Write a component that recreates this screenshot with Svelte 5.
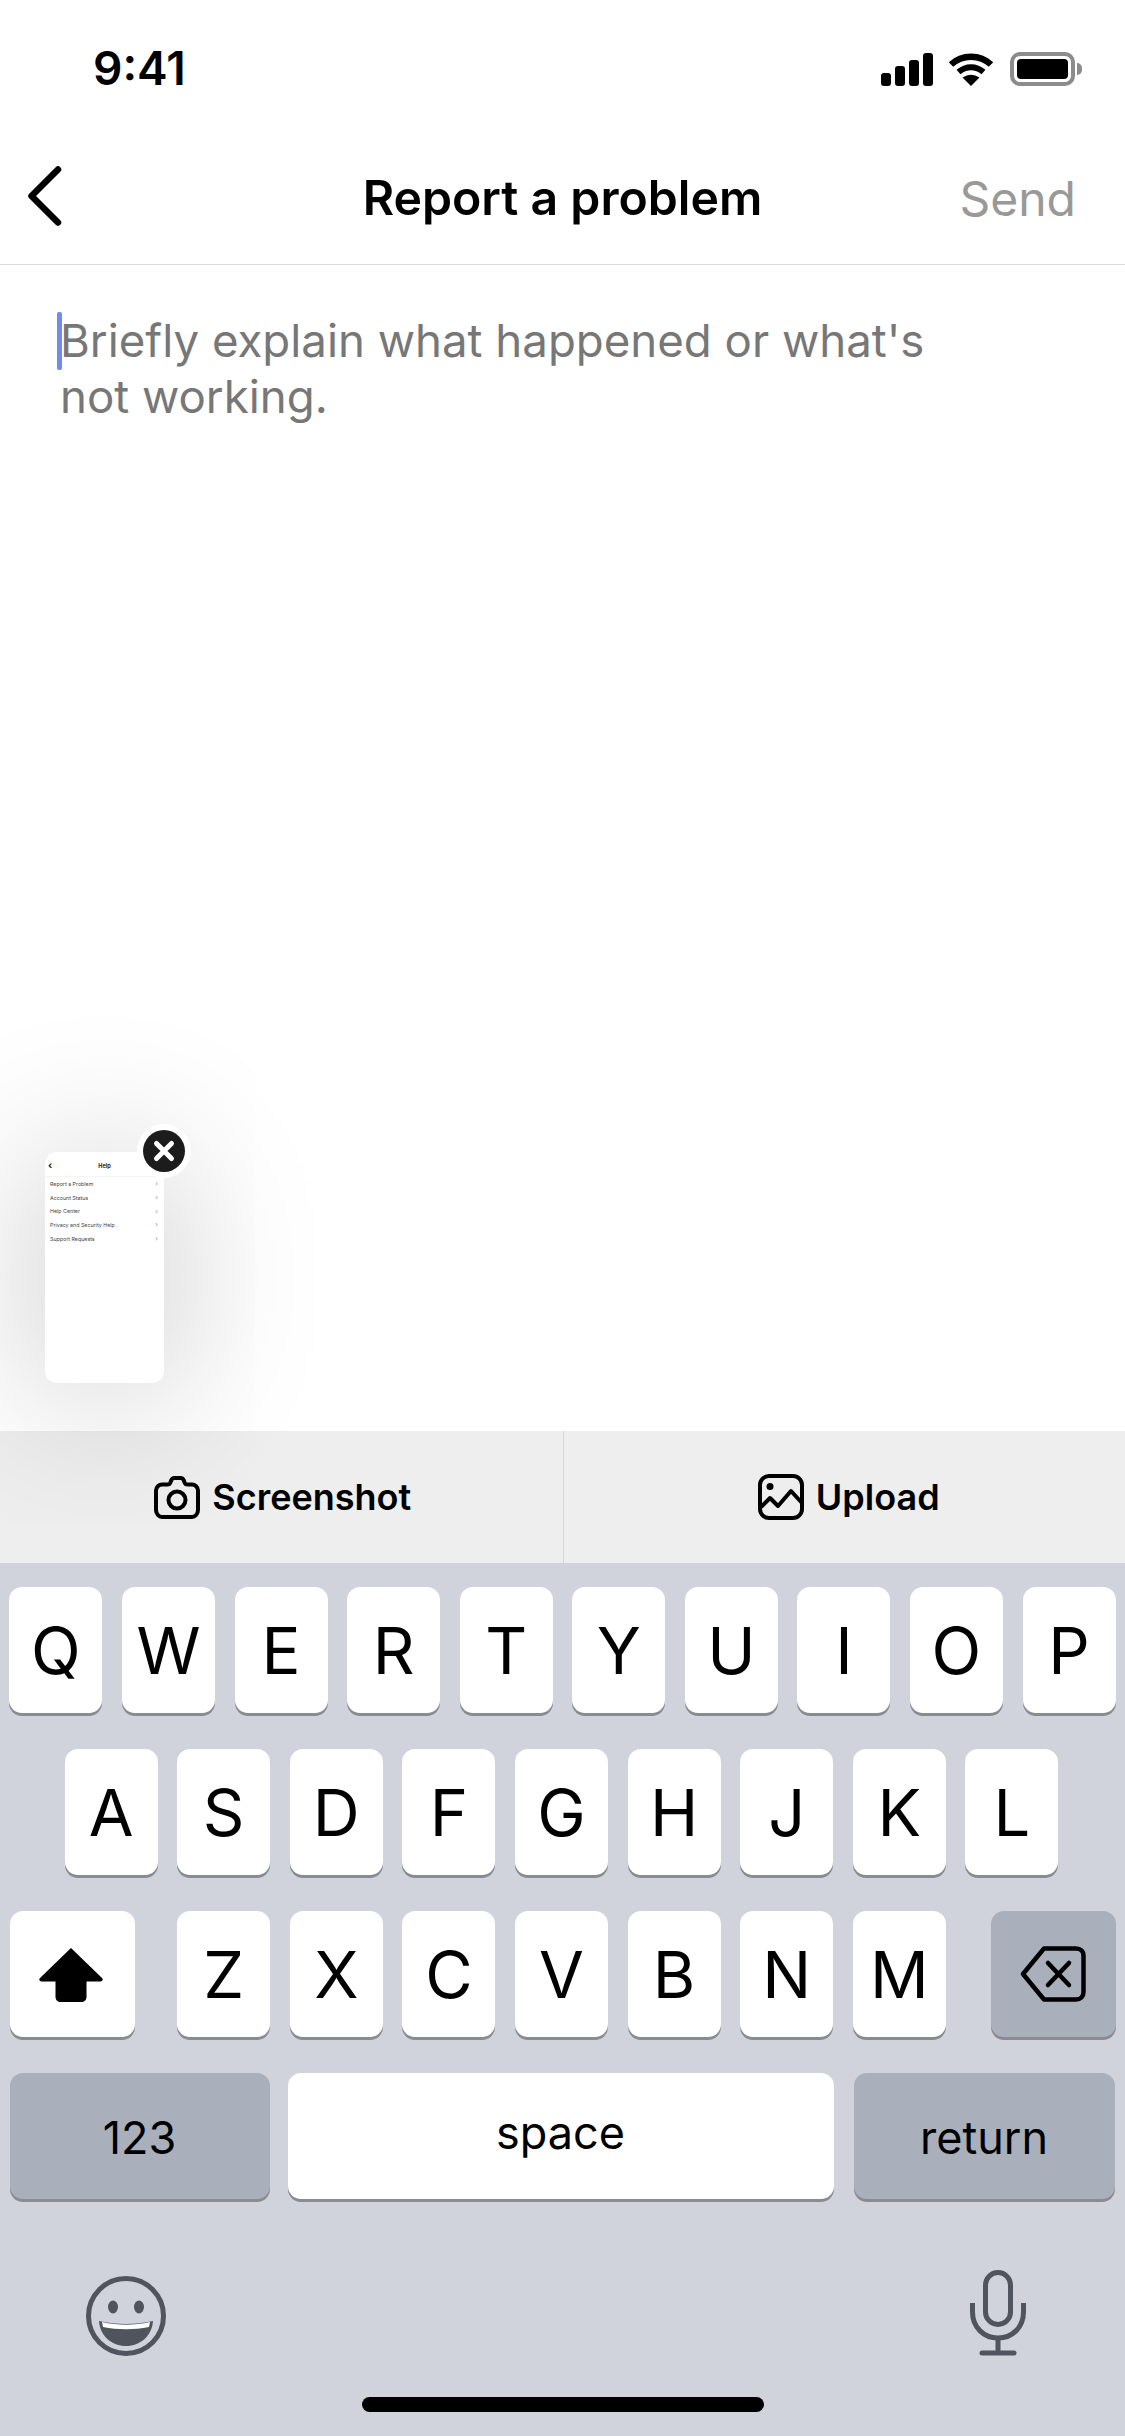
<script>
  const row1 = ['Q','W','E','R','T','Y','U','I','O','P'];
  const row2 = ['A','S','D','F','G','H','J','K','L'];
  const row3 = ['Z','X','C','V','B','N','M'];
  const helpRows = ['Report a Problem','Account Status','Help Center','Privacy and Security Help','Support Requests'];
</script>

<div class="screen">
  <header class="status">
    <span class="time">9:41</span>
    <div class="status-icons">
      <svg class="signal" width="52" height="33" viewBox="0 0 52 33" fill="#000">
        <rect x="0" y="20" width="10" height="13" rx="3"/>
        <rect x="14" y="13" width="10" height="20" rx="3"/>
        <rect x="28" y="7" width="10" height="26" rx="3"/>
        <rect x="42" y="0" width="10" height="33" rx="3"/>
      </svg>
      <svg class="wifi" width="46" height="34" viewBox="0 0 46 34">
        <path d="M3 12.5C14 2 32 2 43 12.5" fill="none" stroke="#000" stroke-width="6.5"/>
        <path d="M10.5 20C18 13.5 28 13.5 35.5 20" fill="none" stroke="#000" stroke-width="6"/>
        <path d="M14.500 25.500Q23 20 31.500 25.500L23 34Z" fill="#000"/>
      </svg>
      <div class="battery"><div class="battery-fill"></div></div>
      <div class="battery-cap"></div>
    </div>
  </header>

  <nav class="nav">
    <svg class="back" width="36" height="60" viewBox="0 0 36 60">
      <path d="M32 3.500L5.500 30L32 56.500" fill="none" stroke="#000" stroke-width="6.500" stroke-linecap="round" stroke-linejoin="round"/>
    </svg>
    <h1>Report a problem</h1>
    <span class="send">Send</span>
  </nav>

  <main class="compose">
    <div class="field"><span class="caret"></span><p>Briefly explain what happened or what's<br>not working.</p></div>
    <div class="thumb">
      <div class="thumb-nav"><span class="thumb-back">‹</span><b>Help</b></div>
      {#each helpRows as item}
        <div class="thumb-row"><span>{item}</span><i>›</i></div>
      {/each}
    </div>
    <div class="close">
      <svg width="42" height="42" viewBox="0 0 42 42">
        <circle cx="21" cy="21" r="21" fill="#1c1c1c"/>
        <path d="M13.500 13.500L28.500 28.500M28.500 13.500L13.500 28.500" stroke="#fff" stroke-width="5" stroke-linecap="round"/>
      </svg>
    </div>
  </main>

  <div class="accessory">
    <div class="action shot">
      <svg width="46" height="44" viewBox="0 0 46 44" fill="none" stroke="#000" stroke-width="4">
        <path d="M8 9.500h5.500c1.500 0 2.500-.8 3-2.200l.8-2c.5-1.400 1.500-2.300 3-2.300h6.400c1.500 0 2.500.9 3 2.300l.8 2c.5 1.400 1.500 2.200 3 2.200H38c3 0 6 2.500 6 6V35c0 4-3 7-6 7H8c-3 0-6-3-6-7V15.500c0-3.500 3-6 6-6Z"/>
        <circle cx="23" cy="25" r="8.500"/>
      </svg>
      <span>Screenshot</span>
    </div>
    <div class="action up">
      <svg width="46" height="46" viewBox="0 0 46 46" fill="none" stroke="#000" stroke-width="4">
        <rect x="2" y="2" width="42" height="42" rx="9"/>
        <circle cx="12" cy="12.500" r="3.500" fill="#000" stroke="none"/>
        <path d="M3 33l9-9 8 8 13-15 11 12" stroke-linejoin="round"/>
      </svg>
      <span>Upload</span>
    </div>
  </div>

  <section class="keyboard">
    <div class="row">
      {#each row1 as k}<div class="key">{k}</div>{/each}
    </div>
    <div class="row row2">
      {#each row2 as k}<div class="key">{k}</div>{/each}
    </div>
    <div class="row row3">
      <div class="key shift">
        <svg width="64" height="55" viewBox="0 0 64 55"><path d="M32 1L63 31c1.500 1.500.5 3.500-1.500 3.500H47.500V50c0 2.500-2 5-4.500 5H21c-2.500 0-4.500-2.500-4.500-5V34.500H2.500C.5 34.500-.5 32.500 1 31L32 1Z" fill="#000"/></svg>
      </div>
      <div class="letters">
        {#each row3 as k}<div class="key">{k}</div>{/each}
      </div>
      <div class="key delete dark">
        <svg width="66" height="56" viewBox="0 0 66 56" fill="none" stroke="#000" stroke-width="4.500" stroke-linejoin="round" stroke-linecap="round">
          <path d="M24 2.500H56c4.500 0 7.500 3 7.500 7V46c0 4.500-3 7.500-7.500 7.500H24L3 28Z"/>
          <path d="M28 17l21 22M49 17L28 39"/>
        </svg>
      </div>
    </div>
    <div class="row row4">
      <div class="key dark small num">123</div>
      <div class="key small space">space</div>
      <div class="key dark small ret">return</div>
    </div>
    <div class="extras">
      <svg width="80" height="80" viewBox="0 0 80 80">
        <circle cx="40" cy="40" r="37.500" fill="none" stroke="#50545e" stroke-width="5"/>
        <ellipse cx="27" cy="31" rx="5" ry="6.500" fill="#50545e"/>
        <ellipse cx="53" cy="31" rx="5" ry="6.500" fill="#50545e"/>
        <path d="M13 45c17 4 37 4 54 0-1 15-13 25-27 25S14 60 13 45Z" fill="#50545e"/>
        <path d="M16 46c15 3.500 33 3.500 48 0l-1 5c-15 3-31 3-46 0Z" fill="#fff"/>
      </svg>
      <svg width="56" height="86" viewBox="0 0 56 86" fill="none" stroke="#50545e" stroke-width="5">
        <rect x="15.500" y="2.500" width="25" height="52" rx="12.500"/>
        <path d="M2.500 33v9c0 15 11 26 25.500 26s25.500-11 25.500-26v-9"/>
        <path d="M28 68v13" />
        <path d="M12 83h32" stroke-linecap="round"/>
      </svg>
    </div>
    <div class="home"></div>
  </section>
</div>

<style>
  :global(body) { margin: 0; background: #fff; }
  .screen {
    width: 1125px; height: 2436px; display: flex; flex-direction: column;
    font-family: Inter, "Liberation Sans", sans-serif; background: #fff; overflow: hidden;
  }
  .status { height: 132px; flex: none; display: flex; justify-content: space-between; align-items: flex-start; box-sizing: border-box; padding: 44px 43px 0 93px; }
  .time { font-size: 46px; line-height: 48px; font-weight: 600; color: #000; }
  .status-icons { display: flex; align-items: flex-start; margin-top: 8px; }
  .signal { margin-top: 1px; margin-right: 15px; }
  .wifi { margin-right: 16px; }
  .battery { width: 65px; height: 34px; box-sizing: border-box; border: 4px solid #8c8c8c; border-radius: 10px; padding: 3px; }
  .battery-fill { width: 100%; height: 100%; background: #000; border-radius: 4px; }
  .battery-cap { width: 5px; height: 12px; margin: 11px 0 0 2px; background: #8c8c8c; border-radius: 0 6px 6px 0; }

  .nav { height: 133px; flex: none; box-sizing: border-box; display: flex; align-items: center; justify-content: space-between; position: relative; border-bottom: 1.500px solid #dbdbdb; padding: 0 49px 0 26px; }
  .back { margin-top: -4px; }
  .nav h1 { position: absolute; left: 0; right: 0; margin: 0; text-align: center; font-size: 48.200px; line-height: 56px; font-weight: 600; color: #000; }
  .send { font-size: 48px; line-height: 56px; color: #999; padding-top: 2px; }

  .compose { flex: none; height: 1166px; position: relative; z-index: 1; }
  .field { position: relative; padding: 48px 40px 0 60px; }
  .field p { margin: 0; font-size: 45.600px; line-height: 56px; color: #777; }
  .caret { position: absolute; left: 57px; top: 47px; width: 5px; height: 58px; background: #6f8cea; border-radius: 2px; }

  .thumb { position: absolute; left: 45px; top: 887px; width: 119px; height: 231px; background: #fff; border-radius: 12px; box-shadow: 0 10px 160px rgba(0,0,0,.24); box-sizing: border-box; color: #444; font-size: 5.300px; overflow: hidden; }
  .thumb-nav { height: 25px; position: relative; display: flex; align-items: center; justify-content: center; border-bottom: 1px solid #f4f4f4; font-size: 5.500px; padding-top: 4px; box-sizing: border-box; color: #222; }
  .thumb-back { position: absolute; left: 3px; top: 8px; font-size: 10px; line-height: 10px; font-weight: 700; }
  .thumb-row { height: 13.700px; display: flex; align-items: center; justify-content: space-between; padding: 0 6px 0 5px; }
  .thumb-row i { color: #999; font-style: normal; font-size: 7px; }
  .close { position: absolute; left: 137px; top: 859px; width: 54px; height: 54px; background: #fff; border-radius: 50%; display: flex; align-items: center; justify-content: center; }

  .accessory { height: 132px; flex: none; background: #eee; display: grid; grid-template-columns: 563.500px 1fr; position: relative; }
  .action { display: flex; align-items: center; justify-content: center; gap: 12px; font-size: 36px; font-weight: 600; color: #000; }
  .shot { border-right: 1.500px solid #d8d8d8; padding-left: 3px; }
  .up { padding-left: 9px; }

  .keyboard { flex: none; height: 873px; background: #d0d3db; position: relative; padding: 24px 9.500px 0; box-sizing: border-box; z-index: 2; }
  .row { display: flex; justify-content: center; gap: 19.600px; height: 126px; margin-bottom: 36px; }
  .row2 { padding-right: 2px; }
  .key { width: 93px; height: 126px; box-sizing: border-box; background: #fff; border-radius: 13px; box-shadow: 0 3px 0 #8a8b90; display: flex; align-items: center; justify-content: center; font-size: 65px; color: #000; }
  .row3 { justify-content: space-between; gap: 0; }
  .letters { display: flex; gap: 19.600px; margin-right: 2px; }
  .shift, .delete { width: 125px; }
  .shift svg { margin-left: -2px; }
  .dark { background: #a9afbb; }
  .small { font-size: 45px; }
  .row4 { justify-content: flex-start; gap: 0; }
  .num { width: 260px; padding-top: 2px; }
  .space { width: 546px; margin-left: 18px; padding-bottom: 7px; }
  .ret { width: 261px; margin-left: 20px; padding-top: 2px; }
  .extras { position: absolute; left: 86px; right: 99px; top: 707px; display: flex; justify-content: space-between; align-items: flex-end; }
  .home { position: absolute; left: 362px; top: 834px; width: 402px; height: 15px; background: #000; border-radius: 8px; }
</style>
